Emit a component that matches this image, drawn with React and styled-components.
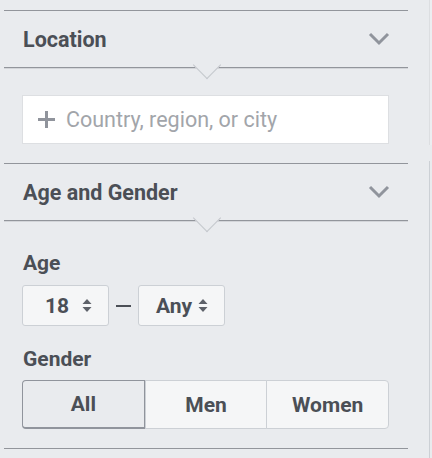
import React, { useState } from "react";
import styled, { createGlobalStyle } from "styled-components";

const GlobalStyle = createGlobalStyle`
  html, body {
    margin: 0;
    padding: 0;
    background: #e9ebee;
  }
  body {
    font-family: Roboto, "Liberation Sans", Arial, sans-serif;
    color: #4b4f56;
  }
`;

const Chevron = () => (
  <svg width="22" height="14" viewBox="0 0 22 14">
    <path d="M2 2 L11 11 L20 2" fill="none" stroke="#90949c" strokeWidth="3" />
  </svg>
);

const Caret = () => (
  <svg width="10" height="15" viewBox="0 0 10 15">
    <path d="M5 1 L9.5 6 L0.5 6 Z" fill="#5d6169" />
    <path d="M5 14 L9.5 9 L0.5 9 Z" fill="#5d6169" />
  </svg>
);

const PlusIcon = () => (
  <svg width="17" height="17" viewBox="0 0 17 17">
    <path d="M8.5 0 V17 M0 8.5 H17" stroke="#90949c" strokeWidth="3" />
  </svg>
);

export default function App() {
  const [gender, setGender] = useState("All");
  return (
    <>
      <GlobalStyle />
      <Page>
        <Panel>
          <Section>
            <Header>
              <Title>Location</Title>
              <Chevron />
              <Notch />
            </Header>
            <Body>
              <SearchBox>
                <PlusIcon />
                <SearchInput placeholder="Country, region, or city" />
              </SearchBox>
            </Body>
          </Section>

          <Section>
            <Header>
              <Title>Age and Gender</Title>
              <Chevron />
              <Notch />
            </Header>
            <Body $top={30}>
              <Label>Age</Label>
              <AgeRow>
                <Select $gap={13}>
                  18 <Caret />
                </Select>
                <Dash />
                <Select $gap={6}>
                  Any <Caret />
                </Select>
              </AgeRow>
              <Label $mt={21}>Gender</Label>
              <Segmented>
                {["All", "Men", "Women"].map((g) => (
                  <Segment key={g} $active={gender === g} onClick={() => setGender(g)}>
                    {g}
                  </Segment>
                ))}
              </Segmented>
            </Body>
          </Section>
          <Section />
        </Panel>
        <Scrollbar>
          <Thumb />
          <Track />
        </Scrollbar>
      </Page>
    </>
  );
}

const Page = styled.div`
  display: flex;
  height: 458px;
  overflow: hidden;
`;

const Panel = styled.div`
  width: 404px;
  margin-left: 4px;
  padding-top: 10px;
`;

const Section = styled.section`
  border-top: 1px solid #92959b;
`;

const Header = styled.div`
  position: relative;
  display: flex;
  align-items: center;
  justify-content: space-between;
  height: 56px;
  padding: 0 18px 0 19px;
  border-bottom: 1px solid #92959b;
  box-shadow: 0 1px 0 #d3d5d9;
`;

const Title = styled.h2`
  margin: 0;
  font-size: 21.5px;
  font-weight: 700;
  color: #4b4f56;
`;

const Notch = styled.span`
  position: absolute;
  left: 193px;
  bottom: -8px;
  width: 19px;
  height: 19px;
  background: #e9ebee;
  border-right: 1px solid #c4c7cc;
  border-bottom: 1px solid #c4c7cc;
  transform: rotate(45deg);
  z-index: 1;
`;

const Body = styled.div`
  padding: ${(p) => p.$top || 27}px 19px 19px 18px;
`;

const SearchBox = styled.div`
  display: flex;
  align-items: center;
  gap: 11px;
  padding: 0 15px;
  box-sizing: border-box;
  width: 367px;
  height: 49px;
  background: #fff;
  border: 1px solid #dddfe2;
`;

const SearchInput = styled.input`
  flex: 1;
  border: none;
  outline: none;
  background: transparent;
  font-family: inherit;
  font-size: 21.5px;
  color: #4b4f56;
  padding: 0;
  &::placeholder {
    color: #a2a5aa;
  }
`;

const Label = styled.div`
  font-size: 21px;
  line-height: 24px;
  font-weight: 700;
  margin-top: ${(p) => p.$mt || 0}px;
  margin-left: 1px;
`;

const AgeRow = styled.div`
  display: flex;
  align-items: center;
  gap: 7px;
  margin-top: 10px;
`;

const Select = styled.div`
  display: flex;
  align-items: center;
  justify-content: flex-end;
  gap: ${(p) => p.$gap}px;
  width: 87px;
  height: 41px;
  padding-right: 16px;
  box-sizing: border-box;
  background: #f5f6f7;
  border: 1px solid #ccd0d5;
  border-radius: 3px;
  font-size: 21px;
  font-weight: 700;
  color: #4b4f56;
`;

const Dash = styled.span`
  width: 15px;
  height: 2px;
  background: #4b4f56;
`;

const Segmented = styled.div`
  display: flex;
  margin-top: 9px;
  width: 367px;
  height: 49px;
`;

const Segment = styled.button`
  flex: 1;
  height: 100%;
  font-family: inherit;
  font-size: 21px;
  font-weight: 700;
  color: #4b4f56;
  background: ${(p) => (p.$active ? "#e9ebee" : "#f5f6f7")};
  border: 1px solid ${(p) => (p.$active ? "#90949c" : "#ccd0d5")};
  border-width: ${(p) => (p.$active ? "1px 2px 2px 1px" : "1px")};
  margin-left: -1px;
  padding: 0;
  cursor: pointer;
  &:first-child {
    margin-left: 0;
    border-radius: 4px 0 0 4px;
  }
  &:last-child {
    border-radius: 0 4px 4px 0;
  }
`;

const Scrollbar = styled.div`
  margin-left: auto;
  width: 3px;
  display: flex;
  flex-direction: column;
`;

const Thumb = styled.div`
  height: 145px;
  border-left: 1px solid #dcdee1;
  background: #eceef1;
`;

const Track = styled.div`
  flex: 1;
  margin-top: 16px;
  border-left: 1px solid #ccd0d5;
`;
